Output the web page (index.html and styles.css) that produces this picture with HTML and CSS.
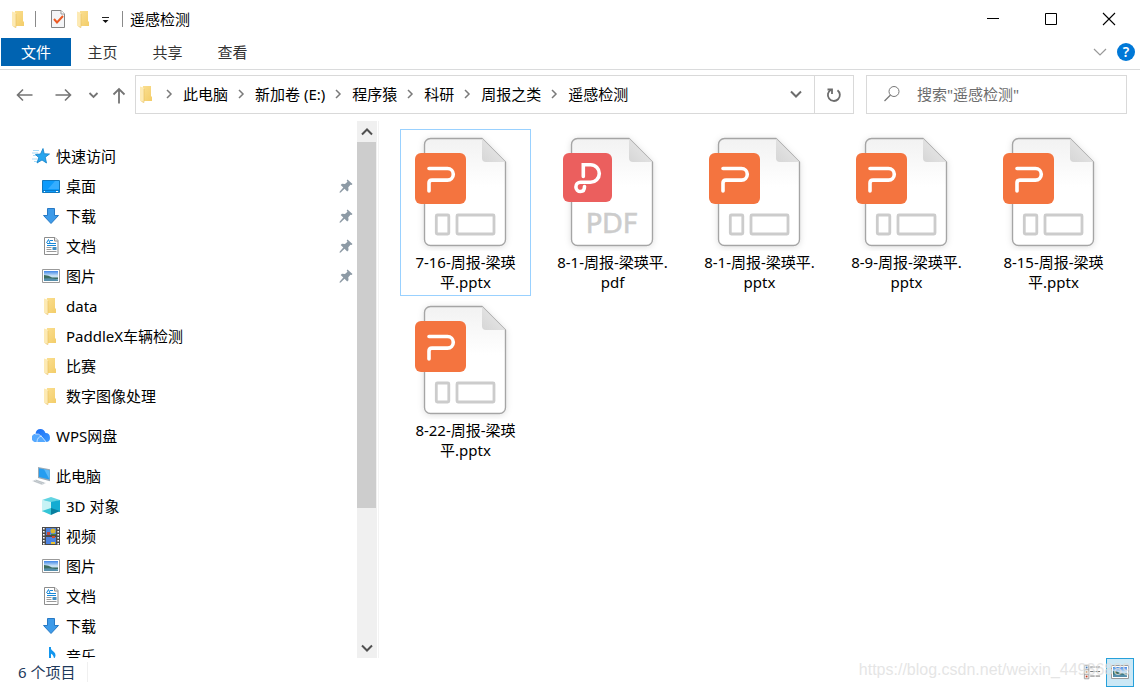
FILE: index.html
```html
<!DOCTYPE html>
<html lang="zh-CN">
<head>
<meta charset="utf-8">
<title>遥感检测</title>
<link rel="stylesheet" href="styles.css">
</head>
<body>
<svg class="defs" aria-hidden="true">
  <defs>
    <linearGradient id="g-folder" x1="0" x2="1" y1="0" y2="1"><stop offset="0" stop-color="#fbe094"/><stop offset="1" stop-color="#f3cd69"/></linearGradient>
    <linearGradient id="g-page" x1="0" x2="0" y1="0" y2="1"><stop offset="0" stop-color="#f2f2f2"/><stop offset=".45" stop-color="#fff"/></linearGradient>
    <linearGradient id="g-fold" x1="0" x2="1" y1="1" y2="0"><stop offset="0" stop-color="#d6d6d6"/><stop offset="1" stop-color="#ececec"/></linearGradient>
    <linearGradient id="g-sky" x1="0" x2="0" y1="0" y2="1"><stop offset="0" stop-color="#3f86e8"/><stop offset=".5" stop-color="#cfe6f5"/><stop offset="1" stop-color="#8fb9cf"/></linearGradient>
    <linearGradient id="g-cloud" x1="0" x2="1" y1="0" y2="1"><stop offset="0" stop-color="#1468f5"/><stop offset="1" stop-color="#3f9bff"/></linearGradient>
    <filter id="soft" x="-20%" y="-20%" width="140%" height="140%"><feDropShadow dx="0" dy="1" stdDeviation="3" flood-color="#000" flood-opacity=".13"/></filter>
  </defs>
  <symbol id="folder" viewBox="0 0 18 18"><path d="M5 1h8v10.500h1V16H3z" fill="url(#g-folder)"/><path d="M2 1.500 5 2.500Q6 3 6 4v13.800L2 15.800z" fill="#fdeab4"/><path d="M6 4v13.500L3.500 16.500" fill="none" stroke="#e8bf60" stroke-width=".6"/></symbol>
  <symbol id="star" viewBox="0 0 18 18"><path d="M1 3.500h6M0 6h6M1 8.500h4M0 12h5M2 14.500h3" stroke="#8fd2f6" stroke-width=".8"/><path d="m11 1.500 1.200 5.200 5.300.3-4.200 3.200 1.200 5.800-4.500-3L5 16l1.700-5.500L3.500 7.500l5-.5z" fill="#27a5ee" stroke="#1180c8" stroke-width=".8"/></symbol>
  <symbol id="desktop" viewBox="0 0 18 18"><path d="M.5 3.500h17v12H.5z" fill="#0d9bfb" stroke="#1378bd"/><path d="m6 12 7-8h4v8z" fill="#35adff"/><path d="M1 13.500h16" stroke="#0878c7"/><path d="M2 14.500h1m11 0h2" stroke="#fff"/></symbol>
  <symbol id="download" viewBox="0 0 18 18"><path d="M5.500 1.500h7v7h4L9 16.500 1.500 8.500h4z" fill="#3e9be9" stroke="#2779c4"/></symbol>
  <symbol id="document" viewBox="0 0 18 18"><path d="M2.500.5H13l3 3v14H2.500z" fill="#fff" stroke="#8d8d8d"/><path d="M12.500.5v3.500H16" fill="#eee" stroke="#8d8d8d"/><path d="m4.500 6 2-3.500L8 6M8 3.500h3M5 6.500h9M5 8.500h9" fill="none" stroke="#1687d8"/><path d="M4.500 10.500h5m-5 2h5m-5 2h10" stroke="#9a9a9a"/><path d="M10.500 10h4v3h-4z" fill="#438fc3"/></symbol>
  <symbol id="picture" viewBox="0 0 18 18"><path d="M.5 2.500h17v13H.5z" fill="#fff" stroke="#9a9a9a"/><path d="M2 4h14v10H2z" fill="url(#g-sky)"/><path d="M2 8q5 0 8 2.500h6V12H2z" fill="#3c6d60"/><path d="M2 11.500q6-1 14 1V14H2z" fill="#568fab"/></symbol>
  <symbol id="cloud" viewBox="0 0 18 18"><path d="M4 15Q0 14.500 0 11t3.500-4Q4 2 8.500 2q3.500 0 5 4Q18 6 18 11q0 4-4 4z" fill="url(#g-cloud)"/><path d="M0 11q0-4 4-4 3 0 5.500 2.500L15 15H4q-4 0-4-4z" fill="#55a9ff"/><path d="M3 7q4-1 7 3l4 5M5 15q0-5 5-6" stroke="#d9ecff" fill="none" stroke-width=".8"/></symbol>
  <symbol id="computer" viewBox="0 0 18 18"><path d="m6 0 13 2.500v12L6 11z" fill="#9aaab6"/><path d="m7 1.200 10.500 2.300v9L7 10z" fill="#259df0"/><path d="m12 2.200 5.500 1.300v9z" fill="#5cb9f8"/><path d="m0 14 4-1.500 10 3.500-4 2z" fill="#d5dade"/><path d="m2 14 8 2.800M4 13.300l8 2.800" stroke="#a8b0b6" stroke-width=".6"/></symbol>
  <symbol id="cube" viewBox="0 0 18 18"><path d="m9 0 9 3-9 3-9-3z" fill="#62d4e2"/><path d="m0 3 9 2v7l-9 3z" fill="#c7f3f5"/><path d="m18 3-9 2v7l9 3z" fill="#13acd2"/><path d="m0 14 9-3v7z" fill="#35c5d6"/><path d="m18 14-9-3v7z" fill="#087f9f"/></symbol>
  <symbol id="video" viewBox="0 0 18 18"><path d="M0 0h18v18.500H0z" fill="#4a4a4a"/><path d="M1.800 1v17M16.200 1v17" stroke="#fff" stroke-width="1.600" stroke-dasharray="1.500 1.500"/><path d="M4 1h10v7H4zM4 10h10v7H4z" fill="#4d83e0"/><path d="M5 5h3v3H5z" fill="#c64a35"/><circle cx="11" cy="4" r="2.500" fill="#d9b52f"/><path d="M9 7h5v1H9z" fill="#40853c"/><path d="M9 15h4v2H9z" fill="#edc534"/><path d="M10 9h3v2h-3z" fill="#d24c25"/></symbol>
  <symbol id="music" viewBox="0 0 18 18"><path d="M8 0v14" stroke="#1296ee" stroke-width="2"/><path d="M8 0q1 3 4 5 3 3 0 7 0-4-4-6z" fill="#1296ee"/><ellipse cx="6" cy="14" rx="3" ry="2.500" fill="#1296ee"/></symbol>
  <symbol id="pin" viewBox="0 0 14 14"><path d="m8.500.500 5 4.500-1 1-1-.3-2.200 2.600.2 3-1.300 1.200-2.700-2.700-3.800 3.700-1.200.3.300-1.200L4.300 8.500 1.700 6 3 4.700l3 .3L8.500 2.800 7.700 1.500z" fill="#8d9aa5"/></symbol>
  <symbol id="chev-r" viewBox="0 0 10 10"><path d="M3 1 7 5 3 9" fill="none" stroke="#7a7a7a" stroke-width="1.500"/></symbol>
  <symbol id="chev-d" viewBox="0 0 14 14"><path d="m2 4.500 5 5 5-5" fill="none" stroke="currentColor" stroke-width="2"/></symbol>
  <symbol id="sheet" viewBox="0 0 129 118"><path d="M29.500 5.500H81l23.500 23.500v77.500a6 6 0 0 1-6 6h-69a6 6 0 0 1-6-6v-95a6 6 0 0 1 6-6z" fill="url(#g-page)" stroke="#a5a5a5" stroke-width="1.400" filter="url(#soft)"/><path d="M81 5.500 104.500 29H85q-4 0-4-4z" fill="url(#g-fold)"/></symbol>
  <symbol id="ppt" viewBox="0 0 129 118"><use href="#sheet"/><rect x="14" y="20" width="51" height="51" rx="6" fill="#f4743f"/><path d="M28 35.500h18.500a5.800 5.800 0 0 1 0 11.600H31q-3 0-3 3V58" fill="none" stroke="#fff" stroke-width="3.600" stroke-linecap="round"/><rect x="35.300" y="82" width="12.500" height="19" rx="1" fill="none" stroke="#ccc" stroke-width="2.800"/><rect x="56" y="82" width="37" height="19" rx="1" fill="none" stroke="#ccc" stroke-width="2.800"/></symbol>
</svg>

<div class="window">
  <header class="titlebar">
    <svg class="ico"><use href="#folder"/></svg>
    <span class="bar"></span>
    <button class="quick" aria-label="属性"><svg class="ico" viewBox="0 0 18 18"><path d="M2.500.500H12L15.500 4v13.500h-13z" fill="#f4f5f7" stroke="#858585"/><path d="M12 .5V4h3.500" fill="#fff" stroke="#999"/><path d="m5 9 3 3.500L14 6" fill="none" stroke="#ec5a24" stroke-width="2"/></svg></button>
    <button class="quick" aria-label="新建文件夹"><svg class="ico"><use href="#folder"/></svg></button>
    <button class="quick more" aria-label="自定义快速访问工具栏"><svg class="caret" viewBox="0 0 8 8"><path d="M1 2.500h7" stroke="#222"/><path d="M1.500 5h6l-3 3z" fill="#111"/></svg></button>
    <span class="bar"></span>
    <h1 class="caption">遥感检测</h1>
    <div class="controls">
      <button aria-label="最小化"><svg viewBox="0 0 14 14"><path d="M1 6.500h12" stroke="#000"/></svg></button>
      <button aria-label="最大化"><svg viewBox="0 0 14 14"><path d="M1.500 1.500h11v11h-11z" fill="none" stroke="#000"/></svg></button>
      <button aria-label="关闭"><svg viewBox="0 0 14 14"><path d="m1 1 12 12M13 1 1 13" stroke="#000" stroke-width="1.100"/></svg></button>
    </div>
  </header>

  <nav class="ribbon">
    <button class="tab tab-file">文件</button>
    <button class="tab">主页</button>
    <button class="tab">共享</button>
    <button class="tab">查看</button>
    <button class="expand" aria-label="展开功能区"><svg viewBox="0 0 14 14"><path d="m1 4 6 6 6-6" fill="none" stroke="#999" stroke-width="1.200"/></svg></button>
    <button class="help" aria-label="帮助">?</button>
  </nav>

  <div class="navrow">
    <div class="history">
      <button aria-label="后退"><svg viewBox="0 0 18 18"><path d="M16.500 9h-15M7 3.500 1.500 9 7 14.500" fill="none" stroke="#747474" stroke-width="1.600"/></svg></button>
      <button aria-label="前进"><svg viewBox="0 0 18 18"><path d="M1.500 9h15M11 3.500 16.500 9 11 14.500" fill="none" stroke="#747474" stroke-width="1.600"/></svg></button>
      <button class="recent" aria-label="最近浏览的位置"><svg viewBox="0 0 14 14"><path d="m3.500 5 4 4 4-4" fill="none" stroke="#747474" stroke-width="1.800"/></svg></button>
      <button class="up" aria-label="向上"><svg viewBox="0 0 18 18"><path d="M9 17.500V3M3.500 8.500 9 3l5.500 5.500" fill="none" stroke="#747474" stroke-width="1.800"/></svg></button>
    </div>
    <div class="address">
      <svg class="ico"><use href="#folder"/></svg>
      <svg class="sep"><use href="#chev-r"/></svg><a href="#">此电脑</a>
      <svg class="sep"><use href="#chev-r"/></svg><a href="#">新加卷 (E:)</a>
      <svg class="sep"><use href="#chev-r"/></svg><a href="#">程序猿</a>
      <svg class="sep"><use href="#chev-r"/></svg><a href="#">科研</a>
      <svg class="sep"><use href="#chev-r"/></svg><a href="#">周报之类</a>
      <svg class="sep"><use href="#chev-r"/></svg><a href="#">遥感检测</a>
      <button class="drop" aria-label="以前的位置"><svg><use href="#chev-d"/></svg></button>
      <button class="refresh" aria-label="刷新"><svg viewBox="0 0 16 16"><path d="M11.500 3.200a6 6 0 1 1-6.500-.5" fill="none" stroke="#6c6c6c" stroke-width="1.800"/><path d="M1.500 2.500H6V7" fill="none" stroke="#6c6c6c" stroke-width="1.800"/></svg></button>
    </div>
    <label class="search">
      <svg viewBox="0 0 18 18"><circle cx="11" cy="6.500" r="5" fill="none" stroke="#777"/><path d="M7.500 10 1.500 16" stroke="#777" stroke-width="1.200"/></svg>
      <input type="search" aria-label="搜索" placeholder="搜索&quot;遥感检测&quot;">
    </label>
  </div>

  <div class="body">
    <nav class="tree">
      <ul>
        <li><a href="#"><svg class="ico"><use href="#star"/></svg>快速访问</a>
          <ul>
            <li><a href="#"><svg class="ico"><use href="#desktop"/></svg>桌面<svg class="pin"><use href="#pin"/></svg></a></li>
            <li><a href="#"><svg class="ico"><use href="#download"/></svg>下载<svg class="pin"><use href="#pin"/></svg></a></li>
            <li><a href="#"><svg class="ico"><use href="#document"/></svg>文档<svg class="pin"><use href="#pin"/></svg></a></li>
            <li><a href="#"><svg class="ico"><use href="#picture"/></svg>图片<svg class="pin"><use href="#pin"/></svg></a></li>
            <li><a href="#"><svg class="ico"><use href="#folder"/></svg>data</a></li>
            <li><a href="#"><svg class="ico"><use href="#folder"/></svg>PaddleX车辆检测</a></li>
            <li><a href="#"><svg class="ico"><use href="#folder"/></svg>比赛</a></li>
            <li><a href="#"><svg class="ico"><use href="#folder"/></svg>数字图像处理</a></li>
          </ul>
        </li>
        <li><a href="#"><svg class="ico"><use href="#cloud"/></svg>WPS网盘</a></li>
        <li><a href="#"><svg class="ico"><use href="#computer"/></svg>此电脑</a>
          <ul>
            <li><a href="#"><svg class="ico"><use href="#cube"/></svg>3D 对象</a></li>
            <li><a href="#"><svg class="ico"><use href="#video"/></svg>视频</a></li>
            <li><a href="#"><svg class="ico"><use href="#picture"/></svg>图片</a></li>
            <li><a href="#"><svg class="ico"><use href="#document"/></svg>文档</a></li>
            <li><a href="#"><svg class="ico"><use href="#download"/></svg>下载</a></li>
            <li><a href="#"><svg class="ico"><use href="#music"/></svg>音乐</a></li>
          </ul>
        </li>
      </ul>
    </nav>
    <div class="scroll">
      <button class="flip" aria-label="向上滚动"><svg><use href="#chev-d"/></svg></button>
      <div class="track"><div class="thumb"></div></div>
      <button aria-label="向下滚动"><svg><use href="#chev-d"/></svg></button>
    </div>
    <main class="files">
      <a class="file selected" href="#"><svg><use href="#ppt"/></svg><span>7-16-周报-梁瑛<br>平.pptx</span></a>
      <a class="file" href="#"><svg viewBox="0 0 129 118"><use href="#sheet"/><rect x="15" y="20" width="49" height="49" rx="6" fill="#eb5f5e"/><path d="M35.300 43.500V31.700h7.200a8.800 8.800 0 0 1 0 17.600h-10a4.600 4.600 0 0 0 0 9.200q4 0 4-5" fill="none" stroke="#fff" stroke-width="3.600" stroke-linecap="round"/><text class="pdf" x="64" y="100" text-anchor="middle">PDF</text></svg><span>8-1-周报-梁瑛平.<br>pdf</span></a>
      <a class="file" href="#"><svg><use href="#ppt"/></svg><span>8-1-周报-梁瑛平.<br>pptx</span></a>
      <a class="file" href="#"><svg><use href="#ppt"/></svg><span>8-9-周报-梁瑛平.<br>pptx</span></a>
      <a class="file" href="#"><svg><use href="#ppt"/></svg><span>8-15-周报-梁瑛<br>平.pptx</span></a>
      <a class="file" href="#"><svg><use href="#ppt"/></svg><span>8-22-周报-梁瑛<br>平.pptx</span></a>
    </main>
  </div>

  <footer class="status">
    <span class="count">6 个项目</span>
    <div class="views">
      <button aria-label="详细信息"><svg viewBox="0 0 20 18"><path d="M1.500 1.500h5v15h-5zM1.500 6.500h5m-5 5h5" fill="#fff" stroke="#999"/><path d="M3 3h2v2H3z" fill="#3a7ab8"/><path d="M3 8h2v2H3z" fill="#d8a878"/><path d="M3 13h2v2H3z" fill="#c3391c"/><path d="M8 3.500h5m1 0h5M8 8.500h5m1 0h5M8 13.500h5m1 0h5" stroke="#666"/></svg></button>
      <button class="active" aria-label="大图标"><svg><use href="#picture"/></svg></button>
    </div>
    <span class="watermark">https://blog.csdn.net/weixin_44936889</span>
  </footer>
</div>
</body>
</html>
```

FILE: styles.css
```css
* { box-sizing: border-box; }

body {
  margin: 0;
  background: #fff;
  color: #000;
  font: 15px/20px "Noto Sans", "Noto Sans CJK SC", sans-serif;
}

button, input { font: inherit; color: inherit; }
button {
  display: flex;
  align-items: center;
  justify-content: center;
  padding: 0;
  border: 0;
  background: none;
}
a { color: inherit; text-decoration: none; }
ul { list-style: none; margin: 0; padding: 0; }
svg { display: block; flex: none; }
.defs { position: absolute; width: 0; height: 0; }
.ico { width: 18px; height: 18px; }

.window { display: flex; flex-direction: column; height: 100vh; overflow: hidden; }

/* Title bar */
.titlebar { display: flex; align-items: center; height: 38px; flex: none; padding: 0 2px 0 10px; }
.bar { width: 1px; height: 16px; margin: 0 13px 0 7px; background: #8a8a8a; }
.quick { margin-right: 8px; }
.quick.more { margin-right: 6px; }
.caret { width: 8px; height: 8px; }
.titlebar .more + .bar { margin: 0 7px; }
.caption { margin: 0; font-size: 15px; font-weight: 400; }
.controls { display: flex; margin-left: auto; }
.controls button { width: 58px; height: 38px; }
.controls svg { width: 14px; height: 14px; }

/* Ribbon */
.ribbon { display: flex; align-items: center; flex: none; height: 32px; padding: 0 4px 3px 1px; border-bottom: 1px solid #dadbdc; }
.tab { width: 65px; height: 28px; color: #333; }
.tab-file { width: 70px; margin-right: -1px; background: #0063b1; color: #fff; }
.expand { width: 14px; height: 28px; margin-left: auto; }
.expand svg { width: 14px; height: 14px; }
.help { width: 18px; height: 18px; margin: 0 1px 0 10px; border-radius: 50%; background: #0078d7; color: #fff; font-size: 14px; font-weight: 600; }

/* Navigation row */
.navrow { display: flex; flex: none; padding: 5px 13px 7px 0; }
.history { display: flex; align-items: center; width: 135px; padding-left: 16px; }
.history svg { width: 18px; height: 18px; }
.history button + button { margin-left: 20px; }
.history .recent svg { width: 14px; height: 14px; }
.history .up { margin: 0 0 0 10px; }
.history .recent { margin-left: 14px; }
.address { display: flex; align-items: center; flex: 1; height: 39px; margin-right: 12px; padding: 0 0 2px 2px; border: 1px solid #d9d9d9; white-space: nowrap; }
.sep { width: 10px; height: 10px; margin: 0 9px 0 8px; }
.drop { width: 36px; height: 37px; margin-left: auto; color: #6c6c6c; }
.drop svg, .scroll svg { width: 14px; height: 14px; }
.refresh { align-self: flex-start; width: 39px; height: 37px; border-left: 1px solid #d9d9d9; }
.refresh svg { width: 16px; height: 16px; }
.search { display: flex; align-items: center; gap: 16px; width: 261px; height: 39px; padding: 0 16px 2px; border: 1px solid #d9d9d9; }
.search svg { width: 18px; height: 18px; }
.search input { flex: 1; min-width: 0; padding: 0; border: 0; outline: 0; background: none; }
.search input::placeholder { color: #6d6d6d; opacity: 1; }

/* Body */
.body { display: flex; flex: 1; min-height: 0; }
.tree { width: 357px; padding: 20px 4px 0 0; overflow: hidden; }
.tree > ul { display: grid; gap: 10px; }
.tree a { display: flex; align-items: center; gap: 6px; height: 30px; padding-left: 32px; }
.tree ul ul a { padding-left: 42px; }
.pin { width: 14px; height: 14px; margin-left: auto; }
.scroll { display: flex; flex-direction: column; width: 20px; padding-right: 1px; background: #f0f0f0; color: #505050; }
.scroll button { height: 21px; }
.flip svg { transform: rotate(180deg); }
.track { flex: 1; }
.thumb { height: 74%; background: #cdcdcd; }
.files {
  display: grid;
  grid-template-columns: repeat(auto-fill, 131px);
  gap: 1px 16px;
  align-content: start;
  flex: 1;
  margin-left: 1px;
  padding: 8px 16px 0 21px;
  border-left: 1px solid #f3f3f3;
}
.file { display: block; padding: 3px 0; border: 1px solid transparent; text-align: center; }
.file.selected { border-color: #99d1ff; }
.file svg { width: 100%; height: 118px; }
.file span { display: block; padding-top: 1px; }
.pdf { font: 27px "DejaVu Sans", sans-serif; fill: #ccc; stroke: #ccc; stroke-width: 0.5px; }

/* Status bar */
.status { position: relative; display: flex; align-items: center; flex: none; height: 30px; padding: 0 6px 2px 18px; color: #1e395b; }
.count { padding-right: 12px; border-right: 1px solid #f0f0f0; }
.views { display: flex; margin-left: auto; }
.views button { width: 28px; height: 29px; }
.views svg { width: 18px; height: 18px; }
.views .active { border: 1px solid #26a0da; background: #cbe8f6; }
.watermark {
  position: absolute;
  right: 9px;
  top: 2px;
  color: rgba(222, 222, 222, 0.8);
  font: 16px/20px "Liberation Sans", sans-serif;
  pointer-events: none;
}
```
